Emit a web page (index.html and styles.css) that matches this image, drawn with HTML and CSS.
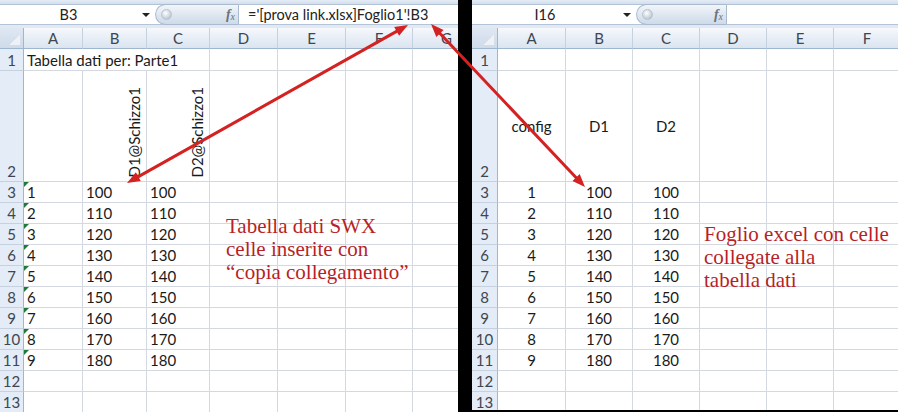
FILE: index.html
```html
<!DOCTYPE html>
<html lang="it">
<head>
<meta charset="utf-8">
<title>Collegamento tabella dati</title>
<link rel="stylesheet" href="styles.css">
</head>
<body>

<!-- Workbook with the SolidWorks design table -->
<section class="pane pane-left">
  <div class="strip"></div>
  <div class="fbar">
    <div class="namebox nb-left">B3</div>
    <div class="nb-arrow"></div>
    <div class="pill pill-left"><span class="knob"></span><span class="fx"><i>f</i><sub>x</sub></span></div>
    <div class="formula">='[prova link.xlsx]Foglio1'!B3</div>
  </div>
  <div class="gapline"></div>
  <div class="sheet sheet-left">
    <div class="corner"></div><div class="ch">A</div><div class="ch">B</div><div class="ch">C</div><div class="ch">D</div><div class="ch">E</div><div class="ch">F</div><div class="ch">G</div>

    <div class="rh">1</div><div class="c span3">Tabella dati per: Parte1</div><div class="c"></div><div class="c"></div><div class="c"></div><div class="c"></div>

    <div class="rh">2</div><div class="c"></div><div class="c vt"><span>D1@Schizzo1</span></div><div class="c vt"><span>D2@Schizzo1</span></div><div class="c"></div><div class="c"></div><div class="c"></div><div class="c"></div>

    <div class="rh">3</div><div class="c flag">1</div><div class="c">100</div><div class="c">100</div><div class="c"></div><div class="c"></div><div class="c"></div><div class="c"></div>
    <div class="rh">4</div><div class="c flag">2</div><div class="c">110</div><div class="c">110</div><div class="c"></div><div class="c"></div><div class="c"></div><div class="c"></div>
    <div class="rh">5</div><div class="c flag">3</div><div class="c">120</div><div class="c">120</div><div class="c"></div><div class="c"></div><div class="c"></div><div class="c"></div>
    <div class="rh">6</div><div class="c flag">4</div><div class="c">130</div><div class="c">130</div><div class="c"></div><div class="c"></div><div class="c"></div><div class="c"></div>
    <div class="rh">7</div><div class="c flag">5</div><div class="c">140</div><div class="c">140</div><div class="c"></div><div class="c"></div><div class="c"></div><div class="c"></div>
    <div class="rh">8</div><div class="c flag">6</div><div class="c">150</div><div class="c">150</div><div class="c"></div><div class="c"></div><div class="c"></div><div class="c"></div>
    <div class="rh">9</div><div class="c flag">7</div><div class="c">160</div><div class="c">160</div><div class="c"></div><div class="c"></div><div class="c"></div><div class="c"></div>
    <div class="rh">10</div><div class="c flag">8</div><div class="c">170</div><div class="c">170</div><div class="c"></div><div class="c"></div><div class="c"></div><div class="c"></div>
    <div class="rh">11</div><div class="c flag">9</div><div class="c">180</div><div class="c">180</div><div class="c"></div><div class="c"></div><div class="c"></div><div class="c"></div>
    <div class="rh">12</div><div class="c"></div><div class="c"></div><div class="c"></div><div class="c"></div><div class="c"></div><div class="c"></div><div class="c"></div>
    <div class="rh">13</div><div class="c"></div><div class="c"></div><div class="c"></div><div class="c"></div><div class="c"></div><div class="c"></div><div class="c"></div>
  </div>
</section>

<!-- Excel workbook with the linked cells -->
<section class="pane pane-right">
  <div class="strip"></div>
  <div class="fbar">
    <div class="namebox nb-right">I16</div>
    <div class="nb-arrow"></div>
    <div class="pill pill-right"><span class="knob"></span><span class="fx"><i>f</i><sub>x</sub></span></div>
    <div class="formula"></div>
  </div>
  <div class="gapline"></div>
  <div class="sheet sheet-right">
    <div class="corner"></div><div class="ch">A</div><div class="ch">B</div><div class="ch">C</div><div class="ch">D</div><div class="ch">E</div><div class="ch">F</div>

    <div class="rh">1</div><div class="c"></div><div class="c"></div><div class="c"></div><div class="c"></div><div class="c"></div><div class="c"></div>
    <div class="rh">2</div><div class="c mid">config</div><div class="c mid">D1</div><div class="c mid">D2</div><div class="c"></div><div class="c"></div><div class="c"></div>

    <div class="rh">3</div><div class="c ctr">1</div><div class="c ctr">100</div><div class="c ctr">100</div><div class="c"></div><div class="c"></div><div class="c"></div>
    <div class="rh">4</div><div class="c ctr">2</div><div class="c ctr">110</div><div class="c ctr">110</div><div class="c"></div><div class="c"></div><div class="c"></div>
    <div class="rh">5</div><div class="c ctr">3</div><div class="c ctr">120</div><div class="c ctr">120</div><div class="c"></div><div class="c"></div><div class="c"></div>
    <div class="rh">6</div><div class="c ctr">4</div><div class="c ctr">130</div><div class="c ctr">130</div><div class="c"></div><div class="c"></div><div class="c"></div>
    <div class="rh">7</div><div class="c ctr">5</div><div class="c ctr">140</div><div class="c ctr">140</div><div class="c"></div><div class="c"></div><div class="c"></div>
    <div class="rh">8</div><div class="c ctr">6</div><div class="c ctr">150</div><div class="c ctr">150</div><div class="c"></div><div class="c"></div><div class="c"></div>
    <div class="rh">9</div><div class="c ctr">7</div><div class="c ctr">160</div><div class="c ctr">160</div><div class="c"></div><div class="c"></div><div class="c"></div>
    <div class="rh">10</div><div class="c ctr">8</div><div class="c ctr">170</div><div class="c ctr">170</div><div class="c"></div><div class="c"></div><div class="c"></div>
    <div class="rh">11</div><div class="c ctr">9</div><div class="c ctr">180</div><div class="c ctr">180</div><div class="c"></div><div class="c"></div><div class="c"></div>
    <div class="rh">12</div><div class="c"></div><div class="c"></div><div class="c"></div><div class="c"></div><div class="c"></div><div class="c"></div>
    <div class="rh">13</div><div class="c"></div><div class="c"></div><div class="c"></div><div class="c"></div><div class="c"></div><div class="c"></div>
  </div>
</section>

<!-- Red callouts drawn over both sheets -->
<p class="note note-left">Tabella dati SWX<br>celle inserite con<br>“copia collegamento”</p>
<p class="note note-right">Foglio excel con celle<br>collegate alla<br>tabella dati</p>

<svg class="arrows" width="898" height="412" viewBox="0 0 898 412" aria-hidden="true">
  <g fill="#d42121" stroke="none">
    <!-- formula reference to the design table cell -->
    <line x1="133.97" y1="179.08" x2="401.03" y2="28.92" stroke="#d42121" stroke-width="3"/>
    <polygon points="127,183 140.78,180.99 135.88,172.27"/>
    <polygon points="408,25 399.12,35.73 394.22,27.01"/>
    <!-- design table cell to the linked workbook -->
    <line x1="436.49" y1="29.82" x2="579.51" y2="181.18" stroke="#d42121" stroke-width="3"/>
    <polygon points="431,24 436.30,36.88 443.57,30.02"/>
    <polygon points="585,187 572.44,180.98 579.70,174.12"/>
  </g>
</svg>

</body>
</html>
```

FILE: styles.css
```css
* { box-sizing: border-box; }

body {
  margin: 0;
  width: 898px;
  height: 412px;
  overflow: hidden;
  background: #000;
  display: flex;
  gap: 14px;
  position: relative;
  font-family: Lato, "Open Sans", sans-serif;
  font-size: 15px;
  color: #1a1a1a;
}

.pane {
  background: #fff;
  overflow: hidden;
  display: flex;
  flex-direction: column;
  flex: none;
}
.pane-left { width: 458px; height: 412px; }
.pane-right { width: 426px; height: 410px; }

/* ribbon edge above the formula bar */
.strip {
  height: 4px;
  flex: none;
  background: linear-gradient(#e4ecf6, #d3deeb);
}

.fbar {
  height: 21px;
  flex: none;
  display: flex;
  align-items: stretch;
  background: #fff;
  border-top: 1px solid #b3c4d8;
  border-bottom: 1px solid #b3c4d8;
}

.namebox {
  display: flex;
  align-items: center;
  justify-content: center;
  font-size: 14.5px;
  color: #222;
}
.nb-left { width: 137px; }
.nb-right { width: 146px; }

.nb-arrow {
  width: 18px;
  position: relative;
}
.nb-arrow::after {
  content: "";
  position: absolute;
  left: 5px;
  top: 8px;
  border-left: 4px solid transparent;
  border-right: 4px solid transparent;
  border-top: 4px solid #222;
}

.pill {
  display: flex;
  align-items: center;
  justify-content: space-between;
  padding: 0 3px 0 5px;
  border-radius: 11px 0 0 11px;
  border: 1px solid #a8bad0;
  border-right: none;
  margin-top: -1px;
  margin-bottom: -1px;
  background: linear-gradient(#f3f6fa, #dbe4ef 60%, #cfdbe8);
}
.pill-left { width: 83px; }
.pill-right { width: 90px; }

.knob {
  width: 11px;
  height: 11px;
  border-radius: 50%;
  background: radial-gradient(circle at 40% 35%, #ffffff, #c9d2dc 60%, #a3afbd);
  border: 1px solid #b9c4d0;
}

.fx {
  font-family: "Liberation Serif", serif;
  font-style: italic;
  font-size: 14px;
  color: #6a727d;
  line-height: 1;
}
.fx i { font-weight: bold; }
.fx sub { font-size: 10px; vertical-align: -1px; }

.formula {
  flex: 1;
  border-left: 1px solid #a8bad0;
  padding-left: 9px;
  display: flex;
  align-items: center;
  font-size: 14.5px;
  color: #222;
  white-space: nowrap;
}

.gapline {
  height: 3px;
  flex: none;
  background: #e2e9f2;
}

/* worksheet grid */
.sheet {
  display: grid;
  grid-template-rows: 21px 22px 111px repeat(11, 21px);
}
.sheet-left { grid-template-columns: 24px 59px 64px 63px 68px 68px 67px 68px; }
.sheet-right { grid-template-columns: 26px 68px 67px 67px 67px 67px 67px; }

.corner {
  border-right: 1px solid #9eb6ce;
  border-bottom: 1px solid #9eb6ce;
  background:
    linear-gradient(135deg, transparent 55%, #eef2f7 55%) no-repeat right 3px bottom 3px / 12px 12px,
    linear-gradient(#dfe7f2, #cfdbea);
}

.ch {
  display: flex;
  align-items: center;
  justify-content: center;
  border-right: 1px solid #c5d1df;
  border-bottom: 1px solid #9eb6ce;
  background: linear-gradient(#f6f8fb, #e6edf6 55%, #dbe4ef);
  color: #3e4650;
  font-size: 15px;
}

.rh {
  display: flex;
  align-items: flex-end;
  justify-content: center;
  padding-bottom: 1px;
  line-height: 18px;
  border-right: 1px solid #9eb6ce;
  border-bottom: 1px solid #c5d1df;
  background: #e4ecf7;
  color: #3e4650;
  font-size: 15px;
}

.c {
  display: flex;
  align-items: flex-end;
  padding: 0 0 1px 3px;
  line-height: 18px;
  white-space: nowrap;
  border-right: 1px solid #d4d9e1;
  border-bottom: 1px solid #d4d9e1;
  position: relative;
}
.span3 { grid-column: span 3; }

.ctr { justify-content: center; padding-left: 0; }
.mid { justify-content: center; align-items: center; padding: 0; }

/* rotated column headings of the design table */
.vt {
  justify-content: flex-end;
  padding: 0 4px 3px 0;
}
.vt span {
  writing-mode: vertical-rl;
  transform: rotate(180deg);
  line-height: 15px;
}

/* number-stored-as-text marker */
.flag::before {
  content: "";
  position: absolute;
  left: 0;
  top: 0;
  border-top: 5px solid #1f7a3a;
  border-right: 5px solid transparent;
}

.note {
  position: absolute;
  margin: 0;
  font-family: "Liberation Serif", "Times New Roman", serif;
  font-size: 21px;
  line-height: 23px;
  color: #b81f27;
  white-space: nowrap;
}
.note-left { left: 226px; top: 215px; }
.note-right { left: 704px; top: 223px; }

.arrows {
  position: absolute;
  left: 0;
  top: 0;
  pointer-events: none;
}
```
